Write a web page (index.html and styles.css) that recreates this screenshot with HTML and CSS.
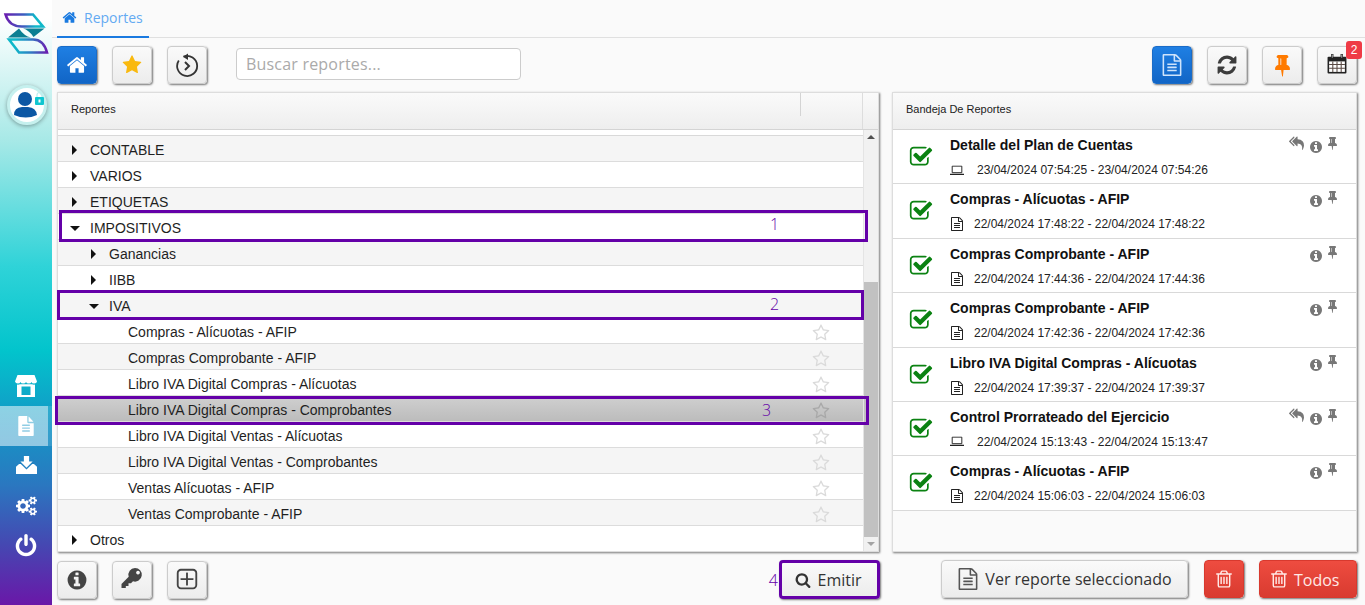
FILE: index.html
```html
<!DOCTYPE html>
<html lang="es">
<head>
<meta charset="utf-8">
<title>Reportes</title>
<link rel="stylesheet" href="styles.css">
</head>
<body>
<svg class="sprite" aria-hidden="true">
<symbol id="i-home" viewBox="0 0 1792 1792"><path d="M1472 992v480q0 26-19 45t-45 19h-384v-384h-256v384h-384q-26 0-45-19t-19-45v-480q0-1 .5-3t.5-3l575-474 575 474q1 2 1 6zm223-69l-62 74q-8 9-21 11h-3q-13 0-21-7l-692-577-692 577q-12 8-24 7-13-2-21-11l-62-74q-8-10-7-23.500t11-21.500l719-599q32-26 76-26t76 26l244 204v-195q0-14 9-23t23-9h192q14 0 23 9t9 23v408l219 182q10 8 11 21.500t-7 23.500z"/></symbol>
<symbol id="i-star" viewBox="0 0 1792 1792"><path d="M1728 647q0 22-26 48l-363 354 86 500q1 7 1 20 0 21-10.500 35.500t-30.500 14.500q-19 0-40-12l-449-236-449 236q-22 12-40 12-21 0-31.500-14.500t-10.500-35.500q0-6 2-20l86-500-364-354q-25-27-25-48 0-37 56-46l502-73 225-455q19-41 49-41t49 41l225 455 502 73q56 9 56 46z"/></symbol>
<symbol id="i-star-o" viewBox="0 0 1792 1792"><path d="M1201 1004l306-297-422-62-189-382-189 382-422 62 306 297-73 421 378-199 377 199zm527-357q0 22-26 48l-363 354 86 500q1 7 1 20 0 50-41 50-19 0-40-12l-449-236-449 236q-22 12-40 12-21 0-31.500-14.500t-10.500-35.500q0-6 2-20l86-500-364-354q-25-27-25-48 0-37 56-46l502-73 225-455q19-41 49-41t49 41l225 455 502 73q56 9 56 46z"/></symbol>
<symbol id="i-refresh" viewBox="0 0 1792 1792"><path d="M1639 1056q0 5-1 7-64 268-268 434.500t-478 166.500q-146 0-282.500-55t-243.500-157l-129 129q-19 19-45 19t-45-19-19-45v-448q0-26 19-45t45-19h448q26 0 45 19t19 45-19 45l-137 137q71 66 161 102t187 36q134 0 250-65t186-179q11-17 53-117 8-23 30-23h192q13 0 22.500 9.500t9.500 22.500zm25-800v448q0 26-19 45t-45 19h-448q-26 0-45-19t-19-45 19-45l138-138q-148-137-349-137-134 0-250 65t-186 179q-11 17-53 117-8 23-30 23h-199q-13 0-22.500-9.500t-9.500-22.500v-7q65-268 270-434.500t480-166.500q146 0 284 55.500t245 156.500l130-129q19-19 45-19t45 19 19 45z"/></symbol>
<symbol id="i-pin" viewBox="0 0 1152 1792"><path d="M480 864v-448q0-14-9-23t-23-9-23 9-9 23v448q0 14 9 23t23 9 23-9 9-23zm672 352q0 26-19 45t-45 19h-429l-51 483q-2 12-10.500 20.500t-20.500 8.500h-1q-27 0-32-27l-76-485h-404q-26 0-45-19t-19-45q0-123 78.500-221.500t177.500-98.500v-512q-52 0-90-38t-38-90 38-90 90-38h640q52 0 90 38t38 90-38 90-90 38v512q99 0 177.500 98.500t78.500 221.500z"/></symbol>
<symbol id="i-info" viewBox="0 0 1792 1792"><path d="M1152 1376v-160q0-14-9-23t-23-9h-96v-512q0-14-9-23t-23-9h-320q-14 0-23 9t-9 23v160q0 14 9 23t23 9h96v320h-96q-14 0-23 9t-9 23v160q0 14 9 23t23 9h448q14 0 23-9t9-23zm-128-896v-160q0-14-9-23t-23-9h-192q-14 0-23 9t-9 23v160q0 14 9 23t23 9h192q14 0 23-9t9-23zm640 416q0 209-103 385.500t-279.500 279.500-385.500 103-385.500-103-279.500-279.500-103-385.500 103-385.500 279.500-279.500 385.500-103 385.500 103 279.500 279.500 103 385.500z"/></symbol>
<symbol id="i-key" viewBox="0 0 24 24"><path fill-rule="evenodd" d="M15 0a6.800 6.800 0 1 1-2 13.300L11 15.300H8.500V18H5.800V20H1.500V16L8.700 8.800A6.800 6.800 0 0 1 15 0ZM18 2.700a1.900 1.900 0 1 0 .01 0Z"/></symbol>
<symbol id="i-search" viewBox="0 0 1792 1792"><path d="M1216 832q0-185-131.500-316.500t-316.500-131.500-316.500 131.500-131.500 316.500 131.500 316.500 316.500 131.500 316.500-131.500 131.500-316.500zm512 832q0 52-38 90t-90 38q-54 0-90-38l-343-342q-179 124-399 124-143 0-273.500-55.500t-225-150-150-225-55.500-273.500 55.500-273.500 150-225 225-150 273.500-55.500 273.500 55.500 225 150 150 225 55.500 273.500q0 220-124 399l343 343q37 37 37 90z"/></symbol>
<symbol id="i-trash" viewBox="0 0 1792 1792"><path d="M704 736v576q0 14-9 23t-23 9h-64q-14 0-23-9t-9-23v-576q0-14 9-23t23-9h64q14 0 23 9t9 23zm256 0v576q0 14-9 23t-23 9h-64q-14 0-23-9t-9-23v-576q0-14 9-23t23-9h64q14 0 23 9t9 23zm256 0v576q0 14-9 23t-23 9h-64q-14 0-23-9t-9-23v-576q0-14 9-23t23-9h64q14 0 23 9t9 23zm128 724v-948h-896v948q0 22 7 40.500t14.500 27 10.500 8.500h832q3 0 10.500-8.500t14.500-27 7-40.500zm-672-1076h448l-48-117q-7-9-17-11h-317q-10 2-17 11zm928 32v64q0 14-9 23t-23 9h-96v948q0 83-47 143.500t-113 60.500h-832q-66 0-113-58.500t-47-141.500v-952h-96q-14 0-23-9t-9-23v-64q0-14 9-23t23-9h309l70-167q15-37 54-63t79-26h320q40 0 79 26t54 63l70 167h309q14 0 23 9t9 23z"/></symbol>
<symbol id="i-file-o" viewBox="0 0 1792 1792"><path d="M1596 380q28 28 48 76t20 88v1152q0 40-28 68t-68 28h-1344q-40 0-68-28t-28-68v-1600q0-40 28-68t68-28h896q40 0 88 20t76 48zm-444-244v376h376q-10-29-22-41l-313-313q-12-12-41-22zm384 1528v-1024h-416q-40 0-68-28t-28-68v-416h-768v1536h1280zm-1024-864q0-14 9-23t23-9h704q14 0 23 9t9 23v64q0 14-9 23t-23 9h-704q-14 0-23-9t-9-23v-64zm736 224q14 0 23 9t9 23v64q0 14-9 23t-23 9h-704q-14 0-23-9t-9-23v-64q0-14 9-23t23-9h704zm0 256q14 0 23 9t9 23v64q0 14-9 23t-23 9h-704q-14 0-23-9t-9-23v-64q0-14 9-23t23-9h704z"/></symbol>
<symbol id="i-file" viewBox="0 0 1792 1792" preserveAspectRatio="none"><path d="M1596 476q14 14 28 36h-472v-472q22 14 36 28zm-476 164h544v1056q0 40-28 68t-68 28h-1344q-40 0-68-28t-28-68v-1600q0-40 28-68t68-28h800v544q0 40 28 68t68 28zm160 736v-64q0-14-9-23t-23-9h-704q-14 0-23 9t-9 23v64q0 14 9 23t23 9h704q14 0 23-9t9-23zm0-256v-64q0-14-9-23t-23-9h-704q-14 0-23 9t-9 23v64q0 14 9 23t23 9h704q14 0 23-9t9-23zm0-256v-64q0-14-9-23t-23-9h-704q-14 0-23 9t-9 23v64q0 14 9 23t23 9h704q14 0 23-9t9-23z"/></symbol>
<symbol id="i-check" viewBox="0 0 1792 1792"><path d="M1472 930v318q0 119-84.500 203.500t-203.500 84.500h-832q-119 0-203.500-84.500t-84.500-203.500v-832q0-119 84.500-203.500t203.500-84.500h832q63 0 117 25 15 7 18 23 3 17-9 29l-49 49q-10 10-23 10-3 0-9-2-23-6-45-6h-832q-66 0-113 47t-47 113v832q0 66 47 113t113 47h832q66 0 113-47t47-113v-254q0-13 9-22l64-64q10-10 23-10 6 0 12 3 20 8 20 29zm231-489l-814 814q-24 24-57 24t-57-24l-430-430q-24-24-24-57t24-57l110-110q24-24 57-24t57 24l263 263 647-647q24-24 57-24t57 24l110 110q24 24 24 57t-24 57z"/></symbol>
<symbol id="i-reply" viewBox="0 0 1792 1792"><path d="M640 1082v70q0 42-39 59-13 5-25 5-27 0-45-19l-512-512q-19-19-19-45t19-45l512-512q29-31 70-14 39 17 39 59v69l-397 398q-19 19-19 45t19 45zm1152 38q0 58-17 133.500t-38.500 138-48 125-40.500 90.500l-20 40q-8 17-28 17-6 0-9-1-25-8-23-34 43-400-106-565-64-71-170.500-110.500t-267.500-50.500v251q0 42-39 59-13 5-25 5-27 0-45-19l-512-512q-19-19-19-45t19-45l512-512q29-31 70-14 39 17 39 59v262q411 28 599 221 169 173 169 509z"/></symbol>
<symbol id="i-plus" viewBox="0 0 1792 1792"><path d="M1344 800v64q0 14-9 23t-23 9h-352v352q0 14-9 23t-23 9h-64q-14 0-23-9t-9-23v-352h-352q-14 0-23-9t-9-23v-64q0-14 9-23t23-9h352v-352q0-14 9-23t23-9h64q14 0 23 9t9 23v352h352q14 0 23 9t9 23zm128 448v-832q0-66-47-113t-113-47h-832q-66 0-113 47t-47 113v832q0 66 47 113t113 47h832q66 0 113-47t47-113zm128-832v832q0 119-84.500 203.500t-203.500 84.500h-832q-119 0-203.500-84.500t-84.500-203.500v-832q0-119 84.500-203.500t203.500-84.500h832q119 0 203.500 84.500t84.500 203.500z"/></symbol>
<symbol id="i-laptop" viewBox="0 0 16 12"><path d="M2.500 1h11v7.500h-11z" fill="none" stroke="currentColor" stroke-width="1.100"/><path d="M0 9.800h16v1.200H0z"/></symbol>
<symbol id="i-power" viewBox="0 0 1792 1792"><path d="M1664 896q0 156-61 298t-164 245-245 164-298 61-298-61-245-164-164-245-61-298q0-182 80.500-343t226.500-270q43-32 95.500-25t83.500 50q32 42 24.500 94.500t-49.500 84.500q-98 74-151.500 181t-53.500 228q0 104 40.500 198.500t109.500 163.500 163.500 109.500 198.500 40.500 198.500-40.500 163.500-109.500 109.500-163.500 40.500-198.500q0-121-53.500-228t-151.500-181q-42-32-49.500-84.500t24.500-94.500q31-43 84-50t95 25q146 109 226.500 270t80.500 343zm-640-768v640q0 52-38 90t-90 38-90-38-38-90v-640q0-52 38-90t90-38 90 38 38 90z"/></symbol>
<symbol id="i-cogs" viewBox="0 0 1920 1792"><path d="M896 896q0-106-75-181t-181-75-181 75-75 181 75 181 181 75 181-75 75-181zm768 512q0-52-38-90t-90-38-90 38-38 90q0 53 37.500 90.500t90.500 37.500 90.500-37.500 37.500-90.500zm0-1024q0-52-38-90t-90-38-90 38-38 90q0 53 37.500 90.500t90.500 37.500 90.500-37.500 37.500-90.500zm-384 421v185q0 10-7 19.500t-16 10.500l-155 24q-11 35-32 76 34 48 90 115 7 11 7 20 0 12-7 19-23 30-82.500 89.500t-78.500 59.500q-11 0-21-7l-115-90q-37 19-77 31-11 108-23 155-7 24-30 24h-186q-11 0-20-7.500t-10-17.500l-23-153q-34-10-75-31l-118 89q-7 7-20 7-11 0-21-8-144-133-144-160 0-9 7-19 10-14 41-53t47-61q-23-44-35-82l-152-24q-10-1-17-9.500t-7-19.500v-185q0-10 7-19.500t16-10.500l155-24q11-35 32-76-34-48-90-115-7-11-7-20 0-12 7-20 22-30 82-89t79-59q11 0 21 7l115 90q34-18 77-32 11-108 23-154 7-24 30-24h186q11 0 20 7.500t10 17.500l23 153q34 10 75 31l118-89q8-7 20-7 11 0 21 8 144 133 144 160 0 8-7 19-12 16-42 54t-45 60q23 48 34 82l152 23q10 2 17 10.500t7 19.500zm640 533v140q0 16-149 31-12 27-30 52 51 113 51 138 0 4-4 7-122 71-124 71-8 0-46-47t-52-68q-20 2-30 2t-30-2q-14 21-52 68t-46 47q-2 0-124-71-4-3-4-7 0-25 51-138-18-25-30-52-149-15-149-31v-140q0-16 149-31 13-29 30-52-51-113-51-138 0-4 4-7 4-2 35-20t59-34 30-16q8 0 46 46.500t52 67.500q20-2 30-2t30 2q51-71 92-112l6-2q4 0 124 70 4 3 4 7 0 25-51 138 17 23 30 52 149 15 149 31zm0-1024v140q0 16-149 31-12 27-30 52 51 113 51 138 0 4-4 7-122 71-124 71-8 0-46-47t-52-68q-20 2-30 2t-30-2q-14 21-52 68t-46 47q-2 0-124-71-4-3-4-7 0-25 51-138-18-25-30-52-149-15-149-31v-140q0-16 149-31 13-29 30-52-51-113-51-138 0-4 4-7 4-2 35-20t59-34 30-16q8 0 46 46.500t52 67.500q20-2 30-2t30 2q51-71 92-112l6-2q4 0 124 70 4 3 4 7 0 25-51 138 17 23 30 52 149 15 149 31z"/></symbol>
</svg>

<div class="app">
  <nav class="side">
    <svg class="logo" viewBox="0 0 52 56" width="52" height="56">
      <defs>
        <linearGradient id="lg1" x1="0" x2="1" y1="0" y2="0"><stop offset="0" stop-color="#6a1fb0"/><stop offset=".5" stop-color="#3b5fc0"/><stop offset=".8" stop-color="#0fb8c9"/></linearGradient>
        <linearGradient id="lg2" x1="0" x2="1" y1="0" y2="0"><stop offset=".15" stop-color="#0fb8c9"/><stop offset=".55" stop-color="#2c7fc4"/><stop offset="1" stop-color="#6a1fb0"/></linearGradient>
      </defs>
      <path d="M5.500 14.500H33L43 26.500H22Q9 26.500 5.500 14.500Z" fill="none" stroke="url(#lg1)" stroke-width="2.600"/>
      <path d="M47 52.500H19L9 39.500H33Q43.500 39.500 47 52.500Z" fill="none" stroke="url(#lg2)" stroke-width="2.600"/>
      <path d="M8 37.500L19 28.500Q24 36 31 37.500ZM44.500 28.500L33.500 37Q29 30 23 28.500Z" fill="#0b7f93"/>
    </svg>
    <div class="avatar">
      <svg viewBox="0 0 40 40" width="40" height="40">
        <circle cx="20" cy="20" r="18.500" fill="#fff" stroke="#c5f0ee" stroke-width="3"/>
        <circle cx="18" cy="14" r="7" fill="#0b57a4"/>
        <path d="M7 30Q7 22.500 15 22H21Q29 22.500 30 30Q19 35 7 30Z" fill="#0b57a4"/>
        <rect x="28" y="12" width="9" height="8" rx="1" fill="#10c6d0"/>
        <path d="M30 12V10A2.500 2.500 0 0 1 35 10V12" fill="none" stroke="#bfeeee" stroke-width="1.200"/>
        <rect x="31.500" y="14.500" width="2" height="3" fill="#fff"/>
      </svg>
    </div>
    <div class="side-menu">
      <a class="side-item">
        <svg viewBox="0 0 22 22" width="22" height="22"><path d="M2.500 0H19.500L22 6.500Q21.700 8.400 19.200 8.400T16.500 6.900Q16 8.400 13.800 8.400T11 6.900Q10.500 8.400 8.200 8.400T5.500 6.900Q5 8.400 2.800 8.400T0 6.500ZM2 9.600Q3.600 9.900 5 9.300H17Q18.400 9.900 20 9.600V22H2ZM6.500 11.500V20H15.500V11.500Z" fill="#fff" fill-rule="evenodd"/></svg>
      </a>
      <a class="side-item is-active"><svg viewBox="0 0 1792 1792" width="18" height="20" preserveAspectRatio="none"><use href="#i-file"/></svg></a>
      <a class="side-item up-1">
        <svg viewBox="0 0 24 20" width="21" height="18" preserveAspectRatio="none"><path d="M9 0H15V6H19L12 13L5 6H9ZM0 12L3.500 9H5.500L12 15L18.500 9H20.500L24 12V20H0Z" fill="#fff"/></svg>
      </a>
      <a class="side-item"><svg width="21" height="20" viewBox="0 0 1920 1792"><use href="#i-cogs"/></svg></a>
      <a class="side-item"><svg width="24" height="24" viewBox="0 0 1792 1792"><use href="#i-power"/></svg></a>
    </div>
  </nav>

  <main class="main">
    <div class="tabs">
      <div class="tab"><svg class="ic-15" viewBox="0 0 1792 1792"><use href="#i-home"/></svg><span>Reportes</span></div>
    </div>

    <div class="toolbar">
      <button class="btn btn-sq btn-blue"><svg class="ic-22" viewBox="0 0 1792 1792"><use href="#i-home"/></svg></button>
      <button class="btn btn-sq"><svg class="ic-20 c-gold" viewBox="0 0 1792 1792"><use href="#i-star"/></svg></button>
      <button class="btn btn-sq">
        <svg width="24" height="24" viewBox="0 0 24 24"><path d="M8.500 3.700A10 10 0 1 1 3.800 7.500" fill="none" stroke="#333" stroke-width="1.800"/><path d="M13 .5V7L8 3.700Z" fill="#333"/><path d="M10 9L14 13L10 17" fill="none" stroke="#333" stroke-width="2"/></svg>
      </button>
      <input class="search" type="text" placeholder="Buscar reportes...">
      <div class="toolbar-right">
        <button class="btn btn-sq btn-blue"><svg class="ic-22 ic-light" viewBox="0 0 1792 1792"><use href="#i-file-o"/></svg></button>
        <button class="btn btn-sq"><svg class="ic-22 c-dark" viewBox="0 0 1792 1792"><use href="#i-refresh"/></svg></button>
        <button class="btn btn-sq"><svg class="ic-pin c-orange" viewBox="0 0 1152 1792"><use href="#i-pin"/></svg></button>
        <button class="btn btn-sq btn-cal">
          <svg class="cal" width="20" height="21" viewBox="0 0 19 20"><path d="M1.500 3.500H17.500Q18.500 3.500 18.500 4.500V18.500Q18.500 19.500 17.500 19.500H1.500Q.5 19.500 .5 18.500V4.500Q.5 3.500 1.500 3.500Z" fill="#222"/><path d="M2 8H17V18H2Z" fill="#fff"/><path d="M2 11H17M2 14.500H17M5.500 8V18M9.500 8V18M13.500 8V18" stroke="#5a4a44" stroke-width="1"/><path d="M5 1V5M14 1V5" stroke="#222" stroke-width="2.200"/><path d="M5 1.500V4.500M14 1.500V4.500" stroke="#ddd" stroke-width=".7"/></svg>
          <span class="badge">2</span>
        </button>
      </div>
    </div>

    <div class="panels">
      <section class="panel panel-left">
        <header class="panel-head">
          <div class="head-title">Reportes</div>
          <div class="head-fav"></div>
          <div class="head-scroll"></div>
        </header>
        <div class="tree-wrap">
          <div class="tree">
            <div class="tree-gap"></div>
            <div class="row alt l1"><i class="car car-r"></i>CONTABLE</div>
            <div class="row l1"><i class="car car-r"></i>VARIOS</div>
            <div class="row alt l1"><i class="car car-r"></i>ETIQUETAS</div>
            <div class="row l1"><i class="car car-d"></i>IMPOSITIVOS</div>
            <div class="row alt l2"><i class="car car-r"></i>Ganancias</div>
            <div class="row l2"><i class="car car-r"></i>IIBB</div>
            <div class="row alt l2"><i class="car car-d"></i>IVA</div>
            <div class="row l3">Compras - Alícuotas - AFIP<svg class="fav" viewBox="0 0 1792 1792"><use href="#i-star-o"/></svg></div>
            <div class="row alt l3">Compras Comprobante - AFIP<svg class="fav" viewBox="0 0 1792 1792"><use href="#i-star-o"/></svg></div>
            <div class="row l3">Libro IVA Digital Compras - Alícuotas<svg class="fav" viewBox="0 0 1792 1792"><use href="#i-star-o"/></svg></div>
            <div class="row sel l3">Libro IVA Digital Compras - Comprobantes<svg class="fav" viewBox="0 0 1792 1792"><use href="#i-star-o"/></svg></div>
            <div class="row l3">Libro IVA Digital Ventas - Alícuotas<svg class="fav" viewBox="0 0 1792 1792"><use href="#i-star-o"/></svg></div>
            <div class="row alt l3">Libro IVA Digital Ventas - Comprobantes<svg class="fav" viewBox="0 0 1792 1792"><use href="#i-star-o"/></svg></div>
            <div class="row l3">Ventas Alícuotas - AFIP<svg class="fav" viewBox="0 0 1792 1792"><use href="#i-star-o"/></svg></div>
            <div class="row alt l3">Ventas Comprobante - AFIP<svg class="fav" viewBox="0 0 1792 1792"><use href="#i-star-o"/></svg></div>
            <div class="row last l1"><i class="car car-r"></i>Otros</div>
          </div>
          <div class="scrollbar">
            <i class="sb-up"></i>
            <div class="sb-track"><div class="sb-thumb"></div></div>
            <i class="sb-down"></i>
          </div>
        </div>
        <div class="mark mark-1"><span>1</span></div>
        <div class="mark mark-2"><span>2</span></div>
        <div class="mark mark-3"><span>3</span></div>
      </section>

      <section class="panel panel-right">
        <header class="panel-head"><div class="head-title head-title-r">Bandeja De Reportes</div></header>
        <div class="tray">
          <article class="job">
            <svg class="job-check" viewBox="0 0 1792 1792"><use href="#i-check"/></svg>
            <div class="job-body"><div class="job-title">Detalle del Plan de Cuentas</div><div class="job-date"><svg class="ic-laptop" viewBox="0 0 16 12"><use href="#i-laptop"/></svg>23/04/2024 07:54:25 - 23/04/2024 07:54:26</div></div>
            <div class="job-acts"><svg class="a-reply" viewBox="0 0 1792 1792"><use href="#i-reply"/></svg><svg class="a-info" viewBox="0 0 1792 1792"><use href="#i-info"/></svg><svg class="a-pin" viewBox="0 0 1152 1792"><use href="#i-pin"/></svg></div>
          </article>
          <article class="job">
            <svg class="job-check" viewBox="0 0 1792 1792"><use href="#i-check"/></svg>
            <div class="job-body"><div class="job-title">Compras - Alícuotas - AFIP</div><div class="job-date"><svg class="ic-doc" viewBox="0 0 1792 1792"><use href="#i-file-o"/></svg>22/04/2024 17:48:22 - 22/04/2024 17:48:22</div></div>
            <div class="job-acts"><svg class="a-info" viewBox="0 0 1792 1792"><use href="#i-info"/></svg><svg class="a-pin" viewBox="0 0 1152 1792"><use href="#i-pin"/></svg></div>
          </article>
          <article class="job">
            <svg class="job-check" viewBox="0 0 1792 1792"><use href="#i-check"/></svg>
            <div class="job-body"><div class="job-title">Compras Comprobante - AFIP</div><div class="job-date"><svg class="ic-doc" viewBox="0 0 1792 1792"><use href="#i-file-o"/></svg>22/04/2024 17:44:36 - 22/04/2024 17:44:36</div></div>
            <div class="job-acts"><svg class="a-info" viewBox="0 0 1792 1792"><use href="#i-info"/></svg><svg class="a-pin" viewBox="0 0 1152 1792"><use href="#i-pin"/></svg></div>
          </article>
          <article class="job">
            <svg class="job-check" viewBox="0 0 1792 1792"><use href="#i-check"/></svg>
            <div class="job-body"><div class="job-title">Compras Comprobante - AFIP</div><div class="job-date"><svg class="ic-doc" viewBox="0 0 1792 1792"><use href="#i-file-o"/></svg>22/04/2024 17:42:36 - 22/04/2024 17:42:36</div></div>
            <div class="job-acts"><svg class="a-info" viewBox="0 0 1792 1792"><use href="#i-info"/></svg><svg class="a-pin" viewBox="0 0 1152 1792"><use href="#i-pin"/></svg></div>
          </article>
          <article class="job">
            <svg class="job-check" viewBox="0 0 1792 1792"><use href="#i-check"/></svg>
            <div class="job-body"><div class="job-title">Libro IVA Digital Compras - Alícuotas</div><div class="job-date"><svg class="ic-doc" viewBox="0 0 1792 1792"><use href="#i-file-o"/></svg>22/04/2024 17:39:37 - 22/04/2024 17:39:37</div></div>
            <div class="job-acts"><svg class="a-info" viewBox="0 0 1792 1792"><use href="#i-info"/></svg><svg class="a-pin" viewBox="0 0 1152 1792"><use href="#i-pin"/></svg></div>
          </article>
          <article class="job">
            <svg class="job-check" viewBox="0 0 1792 1792"><use href="#i-check"/></svg>
            <div class="job-body"><div class="job-title">Control Prorrateado del Ejercicio</div><div class="job-date"><svg class="ic-laptop" viewBox="0 0 16 12"><use href="#i-laptop"/></svg>22/04/2024 15:13:43 - 22/04/2024 15:13:47</div></div>
            <div class="job-acts"><svg class="a-reply" viewBox="0 0 1792 1792"><use href="#i-reply"/></svg><svg class="a-info" viewBox="0 0 1792 1792"><use href="#i-info"/></svg><svg class="a-pin" viewBox="0 0 1152 1792"><use href="#i-pin"/></svg></div>
          </article>
          <article class="job">
            <svg class="job-check" viewBox="0 0 1792 1792"><use href="#i-check"/></svg>
            <div class="job-body"><div class="job-title">Compras - Alícuotas - AFIP</div><div class="job-date"><svg class="ic-doc" viewBox="0 0 1792 1792"><use href="#i-file-o"/></svg>22/04/2024 15:06:03 - 22/04/2024 15:06:03</div></div>
            <div class="job-acts"><svg class="a-info" viewBox="0 0 1792 1792"><use href="#i-info"/></svg><svg class="a-pin" viewBox="0 0 1152 1792"><use href="#i-pin"/></svg></div>
          </article>
        </div>
      </section>
    </div>

    <div class="footer">
      <div class="foot-left">
        <button class="btn btn-sq"><svg class="ic-22 c-info" viewBox="0 0 1792 1792"><use href="#i-info"/></svg></button>
        <button class="btn btn-sq"><svg class="ic-24 c-info" viewBox="0 0 24 24"><use href="#i-key"/></svg></button>
        <button class="btn btn-sq"><svg class="ic-plus" viewBox="0 0 1792 1792"><use href="#i-plus"/></svg></button>
        <span class="mark-4">4</span>
        <button class="btn btn-emit"><svg class="ic-16" viewBox="0 0 1792 1792"><use href="#i-search"/></svg>Emitir</button>
      </div>
      <div class="foot-right">
        <button class="btn btn-view"><svg class="ic-22 c-grey" viewBox="0 0 1792 1792"><use href="#i-file-o"/></svg>Ver reporte seleccionado</button>
        <button class="btn btn-red btn-sq"><svg class="ic-20" viewBox="0 0 1792 1792"><use href="#i-trash"/></svg></button>
        <button class="btn btn-red btn-all"><svg class="ic-20" viewBox="0 0 1792 1792"><use href="#i-trash"/></svg>Todos</button>
      </div>
    </div>
  </main>
</div>
</body>
</html>
```
FILE: styles.css
```css
* { box-sizing: border-box; }
html, body { margin: 0; height: 605px; overflow: hidden; }
body { font-family: "Liberation Sans", Arial, sans-serif; color: #222; background: #fafafa; }
.sprite { position: absolute; width: 0; height: 0; overflow: hidden; }
svg { display: block; fill: currentColor; flex: none; }
button { font: inherit; color: inherit; }

.app { display: flex; height: 605px; }

/* sidebar */
.side {
  width: 52px; flex: none; display: flex; flex-direction: column; align-items: stretch;
  background: linear-gradient(180deg, #fff 0, #fff 3%, #a8e9e7 23%, #2fd3d8 44%, #02c4cc 58%, #1497c6 70%, #2a78c0 80%, #4548b2 90%, #6a17a8 100%);
}
.logo { height: 56px; }
.avatar { margin: 29px 0 0 7px; width: 40px; height: 40px; filter: drop-shadow(0 1px 2px rgba(0,0,0,.35)); }
.side-menu { margin-top: 241px; color: #fff; }
.side-item { display: flex; align-items: center; justify-content: center; height: 40px; color: #fff; }
.side-item.is-active { background: linear-gradient(90deg, rgba(255,255,255,.52) 48px, rgba(255,255,255,.12) 48px); }
.side-item.up-1 svg { margin-top: -3px; }

/* main */
.main { flex: 1; min-width: 0; padding: 0 8px 0 5px; display: flex; flex-direction: column; background: #fafafa; }
.tabs { height: 38px; flex: none; margin-left: -5px; margin-right: -8px; padding-left: 5px; border-bottom: 1px solid #e0e0e0; }
.tab { width: 92px; height: 38px; padding-left: 5px; display: flex; align-items: center; gap: 7px; font: 14px "Open Sans", sans-serif; color: #64aaf2; border-bottom: 2px solid #1a7ae0; padding-bottom: 2px; }
.tab svg { color: #1a7ae0; }

.toolbar { display: flex; align-items: center; gap: 15px; margin-top: 8px; height: 38px; flex: none; }
.toolbar-right { margin-left: auto; display: flex; gap: 15px; }
.search { align-self: flex-start; margin-top: 2px; width: 285px; height: 32px; margin-left: 14px; padding: 0 9px; border: 1px solid #ccc; border-radius: 4px; background: #fff; font: 16px "Open Sans", sans-serif; letter-spacing: .2px; }
.search::placeholder { color: #aaa; opacity: 1; }

.btn {
  height: 38px; border: 1px solid #ccc; border-radius: 4px; padding: 0;
  background: linear-gradient(180deg, #fafafa, #ececec);
  box-shadow: 1px 1px 2px #777;
  display: flex; align-items: center; justify-content: center;
}
.btn-sq { width: 40px; flex: none; }
.btn-blue { background: linear-gradient(180deg, #1f7fe3, #1165c6); border-color: #1a6cc8; color: #fff; }
.btn-red { background: linear-gradient(180deg, #ee4c40, #d93b30); border-color: #d8392e; color: #ffe9e6; }
.btn-cal { position: relative; }
.cal { margin-top: -3px; margin-left: -1px; }
.badge { position: absolute; top: -6px; right: -6px; width: 16px; height: 18px; border-radius: 3px; background: #ef3b46; color: #fff; font: 12px/18px "Liberation Sans", sans-serif; text-align: center; }

.ic-15 { width: 15px; height: 15px; }
.ic-16 { width: 16px; height: 16px; }
.ic-20 { width: 20px; height: 20px; }
.ic-22 { width: 22px; height: 22px; }
.ic-24 { width: 24px; height: 24px; }
.ic-light { color: #cfe4fb; }
.ic-pin { width: 15px; height: 24px; margin-top: -1px; }
.ic-plus { width: 26px; height: 26px; color: #444; }
.c-gold { color: #f9b90f; }
.c-dark { color: #3c3c3c; }
.c-info { color: #444; }
.c-orange { color: #ff7a00; }
.c-grey { color: #555; }

/* panels */
.panels { display: flex; gap: 13px; height: 460px; margin-top: 8px; flex: none; }
.panel { position: relative; background: #fff; border: 1px solid #ddd; box-shadow: 1px 1px 2px #777; display: flex; flex-direction: column; }
.panel-left { width: 822px; flex: none; }
.panel-right { flex: 1; background: #fafafa; }
.panel-head { height: 37px; flex: none; display: flex; background: linear-gradient(180deg, #fafafa, #eee); border-bottom: 1px solid #d4d4d4; font-size: 11px; }
.head-title { width: 743px; padding: 10px 0 0 13px; position: relative; }
.head-title-r { width: auto; }
.head-title::after { content: ""; position: absolute; right: 0; top: 0; height: 23px; border-right: 1px solid #d4d4d4; }
.head-title-r::after { display: none; }
.head-fav { width: 62px; border-right: 1px solid #ddd; }
.head-scroll { flex: 1; }

.tree-wrap { flex: 1; min-height: 0; display: flex; }
.tree { width: 805px; flex: none; font-size: 14px; }
.tree-gap { height: 6px; border-bottom: 1px solid #d9d9d9; }
.row { height: 26px; padding-top: 2px; border-bottom: 1px solid #dcdcdc; display: flex; align-items: center; position: relative; color: #1f1f1f; }
.row.alt { background: #f5f5f5; }
.row.last { border-bottom: 0; }
.row.sel { background: linear-gradient(180deg, #d0d0d0, #bcbcbc); }
.l1 { padding-left: 14px; }
.l2 { padding-left: 33px; }
.l3 { padding-left: 70px; }
.car { width: 18px; flex: none; height: 0; position: relative; }
.car::before { content: ""; position: absolute; width: 0; height: 0; border-style: solid; border-color: transparent; }
.car-r::before { left: 0; top: -5px; border-width: 5px 0 5px 5px; border-left-color: #111; }
.car-d::before { left: -2px; top: -2px; border-width: 5px 5px 0 5px; border-top-color: #111; }
.fav { position: absolute; left: 754px; top: 6px; width: 18px; height: 18px; color: #dadada; }
.row.sel .fav { color: #a8a8a8; }

.scrollbar { flex: 1; background: #f1f1f1; display: flex; flex-direction: column; border-left: 1px solid #e4e4e4; }
.sb-up, .sb-down { height: 15px; flex: none; position: relative; }
.sb-up::before, .sb-down::before { content: ""; position: absolute; left: 3px; width: 0; height: 0; border-style: solid; border-color: transparent; }
.sb-up::before { top: 5px; border-width: 0 4px 4px 4px; border-bottom-color: #505050; }
.sb-down::before { top: 5px; border-width: 4px 4px 0 4px; border-top-color: #a3a3a3; }
.sb-track { flex: 1; padding-top: 137px; }
.sb-thumb { height: 255px; background: #c1c1c1; }

/* overlay annotations */
.mark { position: absolute; border: 3px solid #6400a8; pointer-events: none; }
.mark span { position: absolute; color: #6400a8; font: 300 16px/16px "Open Sans", sans-serif; }
.mark-1 { left: 1px; top: 117px; width: 809px; height: 32px; }
.mark-1 span { left: 708px; top: 3px; }
.mark-2 { left: -1px; top: 197px; width: 807px; height: 30px; }
.mark-2 span { left: 710px; top: 3px; }
.mark-3 { left: -3px; top: 303px; width: 814px; height: 29px; }
.mark-3 span { left: 704px; top: 3px; }
.mark-4 { margin-left: auto; margin-right: 1px; color: #6400a8; font: 300 16px/1 "Open Sans", sans-serif; }

/* tray */
.tray { flex: 1; }
.job { height: 54.4px; background: #fff; border-bottom: 1px solid #d9d9d9; display: flex; position: relative; }
.job-check { position: absolute; left: 16px; top: 15px; width: 24px; height: 24px; color: #0b8212; }
.job-body { margin-left: 57px; padding-top: 7px; }
.job-title { font-size: 14px; font-weight: 700; line-height: 16px; color: #111; }
.job-date { display: flex; align-items: center; font-size: 12px; line-height: 14px; margin-top: 10px; color: #222; }
.ic-laptop { width: 14px; height: 11px; margin-right: 13px; }
.ic-doc { width: 14px; height: 14px; margin-right: 10px; }
.job-acts { position: absolute; right: 19px; top: 6px; display: flex; align-items: flex-start; color: #777; }
.a-reply { width: 15px; height: 15px; margin-right: 5px; }
.a-info { width: 14px; height: 14px; margin-top: 4px; margin-right: 5px; }
.a-pin { width: 9px; height: 14px; }

/* footer */
.footer { display: flex; gap: 13px; margin-top: 8px; flex: none; }
.foot-left { width: 822px; flex: none; display: flex; align-items: center; gap: 15px; }
.foot-right { flex: 1; display: flex; gap: 15px; justify-content: flex-end; }
.btn-emit { width: 101px; height: 39px; margin-left: -15px; margin-right: -1px; border: 3px solid #6400a8; gap: 6px; padding-right: 2px; font: 16px "Open Sans", sans-serif; color: #333; }
.btn-view { width: 247px; gap: 6px; font: 16px "Open Sans", sans-serif; color: #333; margin-right: 1px; }
.btn-all { width: 98px; gap: 5px; justify-content: flex-start; padding: 2px 0 0 9px; font: 16px "Open Sans", sans-serif; }
.btn-all svg { margin-top: -3px; }
```
